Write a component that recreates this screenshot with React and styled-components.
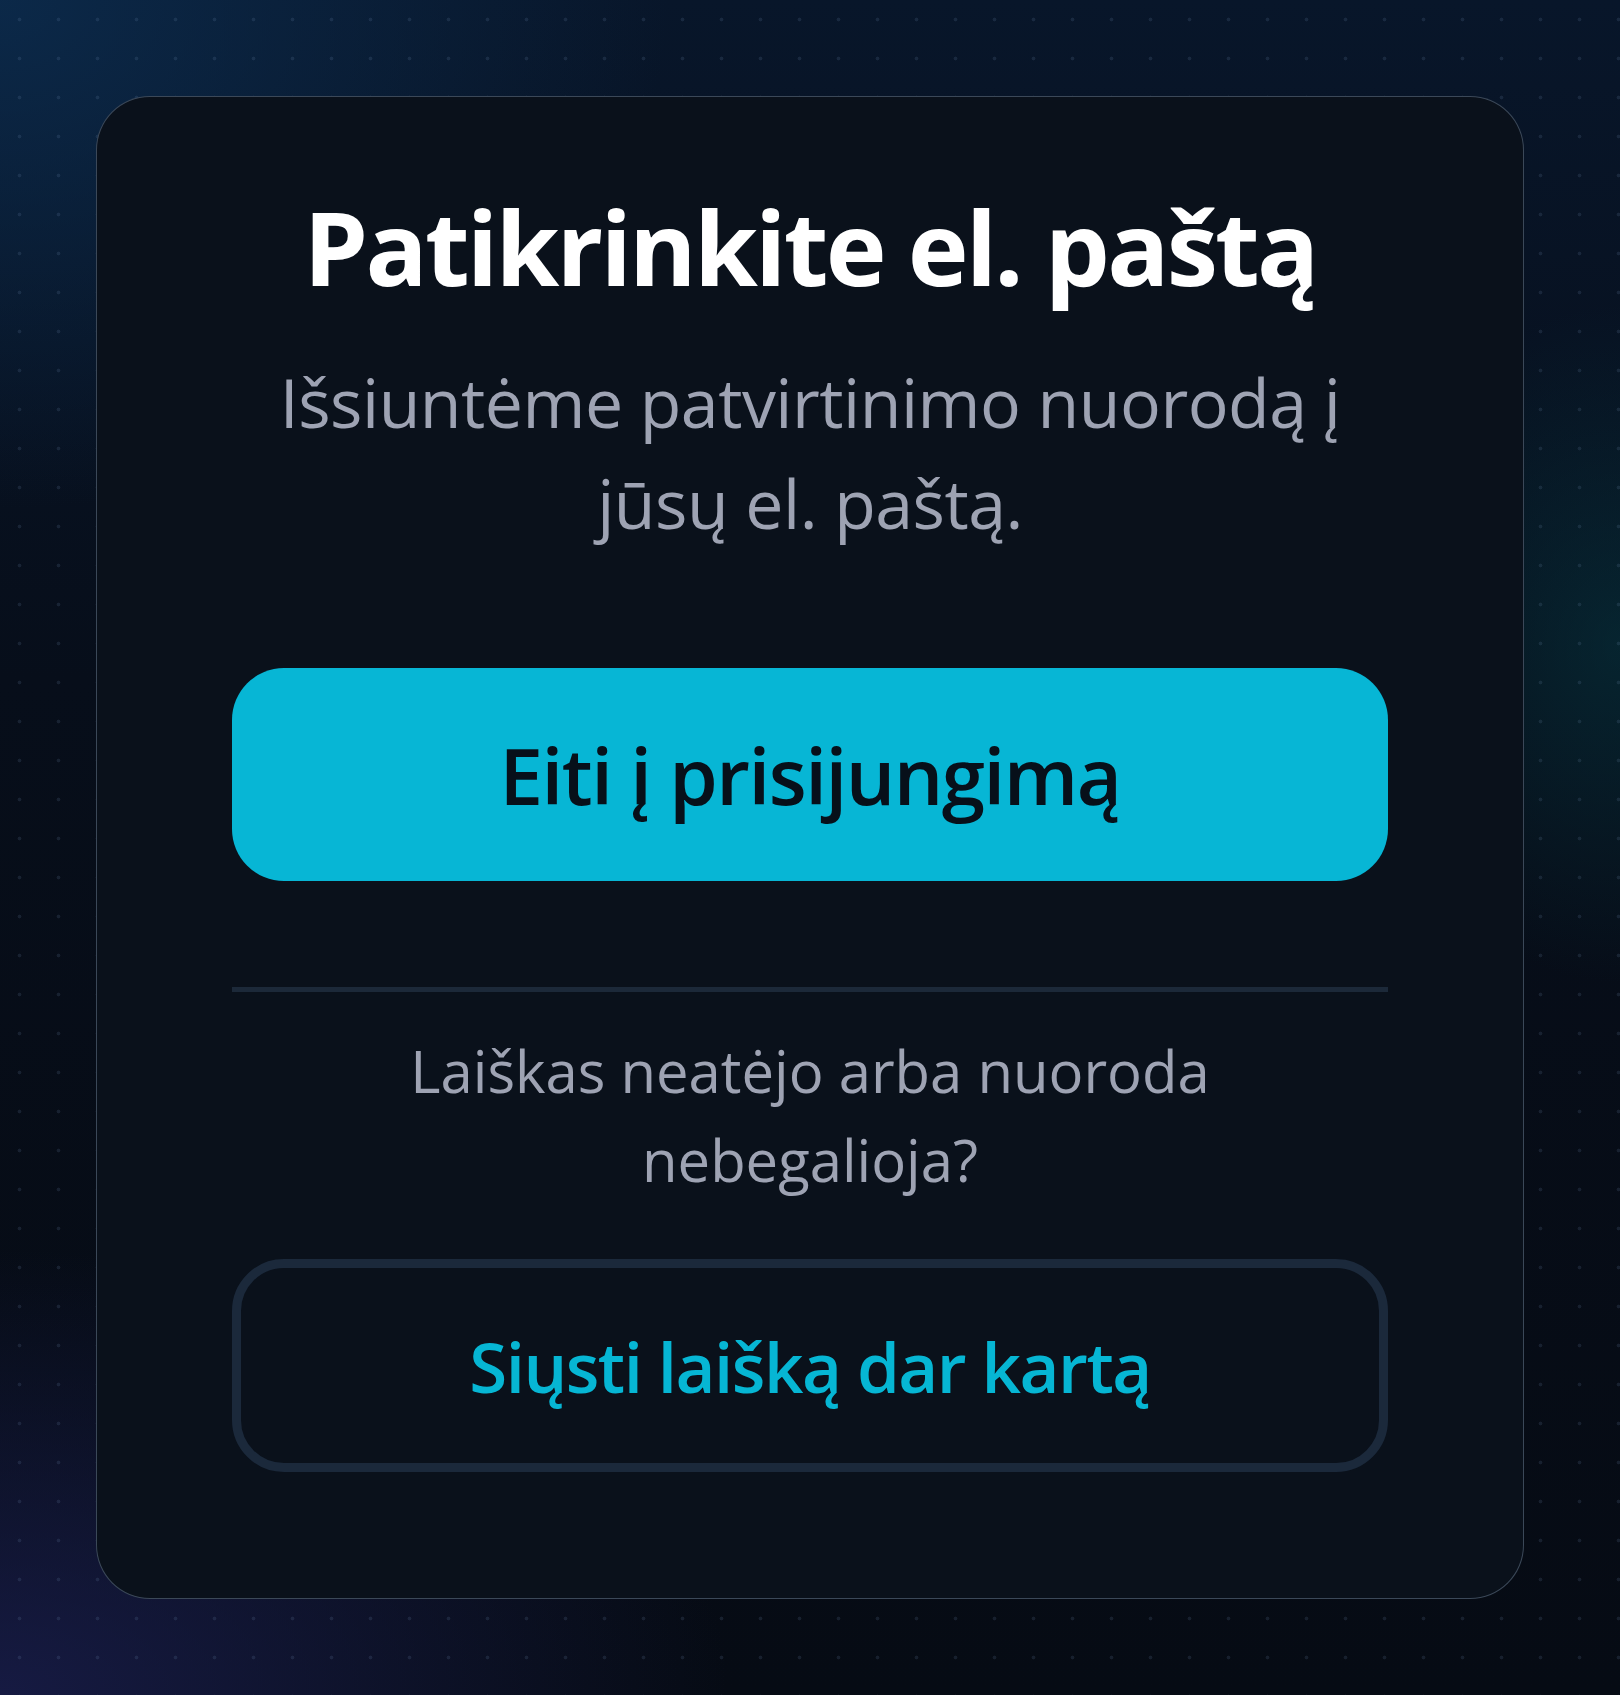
import React from "react";
import styled, { createGlobalStyle } from "styled-components";

const Global = createGlobalStyle`
  html, body { margin: 0; padding: 0; background: #060b14; }
  * { box-sizing: border-box; }
  body { font-family: "Open Sans", "Noto Sans", sans-serif; }
`;

const Page = styled.div`
  min-height: 1695px;
  padding: 96px;
  display: flex;
  align-items: stretch;
  justify-content: center;
  background-color: #060b14;
  background-image:
    radial-gradient(circle at center, rgba(120, 150, 190, 0.15) 0 1.6px, transparent 2.2px),
    radial-gradient(ellipse 55% 40% at 0% 0%, rgba(12, 44, 78, 0.85), transparent 75%),
    radial-gradient(ellipse 60% 35% at 0% 100%, rgba(26, 30, 78, 0.8), transparent 75%),
    radial-gradient(ellipse 20% 25% at 100% 38%, rgba(6, 58, 68, 0.5), transparent 80%),
    linear-gradient(180deg, #08162a 0%, #070e1a 40%, #060b14 100%);
  background-size: 39px 39px, 100% 100%, 100% 100%, 100% 100%, 100% 100%;
  background-position: 0 0, 0 0, 0 0, 0 0, 0 0;
`;

const Card = styled.section`
  width: 100%;
  background: #0a111b;
  border: 1.5px solid rgba(120, 140, 165, 0.45);
  border-radius: 54px;
  padding: 84px 135px 0;
  display: flex;
  flex-direction: column;
  align-items: center;
  text-align: center;
`;

const Title = styled.h1`
  margin: 0;
  font-family: "Open Sans", "Noto Sans", sans-serif;
  font-weight: 700;
  font-size: 103px;
  line-height: 130px;
  letter-spacing: -2.8px;
  color: #ffffff;
`;

const Lead = styled.p`
  margin: 40px 0 0;
  font-family: "Open Sans", "Noto Sans", sans-serif;
  font-weight: 400;
  font-size: 68px;
  line-height: 101px;
  letter-spacing: -0.5px;
  color: #9ea3b3;
  max-width: 1150px;
`;

const Button = styled.button`
  width: 100%;
  height: 213px;
  flex-shrink: 0;
  border-radius: 52px;
  display: flex;
  align-items: center;
  justify-content: center;
  font-family: "Open Sans", "Noto Sans", sans-serif;
  font-weight: 600;
  font-size: ${(p) => p.$size}px;
  letter-spacing: -1.5px;
  cursor: pointer;
  margin-top: ${(p) => p.$top}px;
  background: ${(p) => (p.$variant === "outline" ? "transparent" : "#07b6d5")};
  color: ${(p) => (p.$variant === "outline" ? "#06b6d4" : "#07101a")};
  border: ${(p) => (p.$variant === "outline" ? "9px solid #1b293b" : "none")};
`;

const Divider = styled.hr`
  width: 100%;
  margin: 106px 0 0;
  border: none;
  height: 5px;
  flex-shrink: 0;
  background: #1c2939;
`;

const Hint = styled.p`
  margin: 34px 0 0;
  font-family: "Open Sans", "Noto Sans", sans-serif;
  font-weight: 400;
  font-size: 58px;
  line-height: 89px;
  letter-spacing: 0;
  color: #9ea3b3;
  max-width: 880px;
`;

export default function App() {
  return (
    <>
      <Global />
      <Page>
        <Card>
          <Title>Patikrinkite el. paštą</Title>
          <Lead>Išsiuntėme patvirtinimo nuorodą į jūsų el. paštą.</Lead>
          <Button $size={78} $top={115}>Eiti į prisijungimą</Button>
          <Divider />
          <Hint>Laiškas neatėjo arba nuoroda nebegalioja?</Hint>
          <Button $variant="outline" $size={69} $top={55}>Siųsti laišką dar kartą</Button>
        </Card>
      </Page>
    </>
  );
}
